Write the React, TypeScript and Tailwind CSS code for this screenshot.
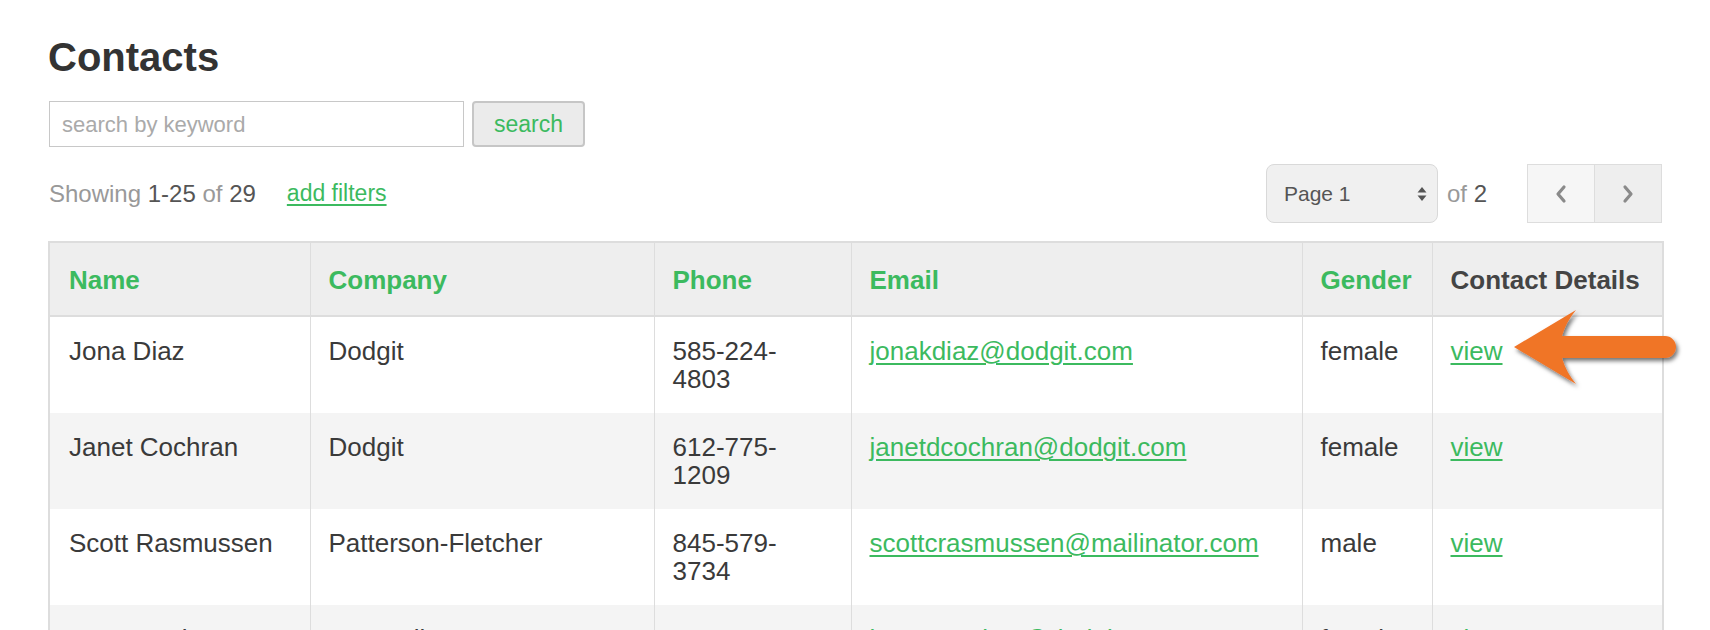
import React from "react";

const rows = [
  { name: "Jona Diaz", company: "Dodgit", phone: ["585-224-", "4803"], email: "jonakdiaz@dodgit.com", gender: "female" },
  { name: "Janet Cochran", company: "Dodgit", phone: ["612-775-", "1209"], email: "janetdcochran@dodgit.com", gender: "female" },
  { name: "Scott Rasmussen", company: "Patterson-Fletcher", phone: ["845-579-", "3734"], email: "scottcrasmussen@mailinator.com", gender: "male" },
  { name: "Jane Mackey", company: "Comtrail", phone: ["516-834-", "2051"], email: "janeemackey@dodgit.com", gender: "female" },
];

function Arrow() {
  return (
    <svg
      className="absolute left-[1500px] top-[300px]"
      width="200"
      height="100"
      viewBox="0 0 200 100"
    >
      <defs>
        <filter id="sh" x="-20%" y="-30%" width="150%" height="170%">
          <feDropShadow dx="2" dy="3" stdDeviation="2" floodColor="#000" floodOpacity="0.55" />
        </filter>
      </defs>
      <path
        d="M14 47 L76 10 Q66 22 62 36 L165 36 A11 11 0 0 1 165 58 L62 58 Q66 72 76 84 Z"
        fill="#f07428"
        filter="url(#sh)"
      />
    </svg>
  );
}

export default function App() {
  return (
    <div className="relative w-full bg-white px-[48px] pt-[35px] font-['Liberation_Sans',Arial,sans-serif] text-[#3a3a3a]">
      <h1 className="text-[40px] font-bold leading-[44px] text-[#333]">Contacts</h1>

      <div className="mt-[22px] flex items-stretch gap-[8px]">
        <div className="ml-[1px] flex h-[46px] w-[415px] items-center border border-[#c8c8c8] pl-[12px] text-[22px] text-[#aaaaaa]">
          search by keyword
        </div>
        <div className="flex h-[46px] w-[113px] items-center justify-center rounded-[4px] border-2 border-[#c6c6c6] bg-[#ebebeb] text-[23px] text-[#3cba5f]">
          search
        </div>
      </div>

      <div className="mt-[17px] flex h-[59px] items-center">
        <div className="ml-[1px] text-[24px] text-[#999]">
          Showing <span className="text-[#555]">1-25</span> of <span className="text-[#555]">29</span>
        </div>
        <span className="ml-[31px] text-[23px] text-[#3cba5f] underline decoration-[2px] underline-offset-[3px]">
          add filters
        </span>
        <div className="flex-1" />
        <div className="flex h-[59px] w-[172px] items-center justify-between rounded-[8px] border border-[#d9d9d9] bg-[#f0f0f0] pl-[17px] pr-[10px] text-[21px] text-[#555]">
          <span>Page 1</span>
          <svg width="10" height="16" viewBox="0 0 10 16">
            <path d="M5 1 L9.5 6.5 L0.5 6.5 Z" fill="#555" />
            <path d="M5 15 L9.5 9.5 L0.5 9.5 Z" fill="#555" />
          </svg>
        </div>
        <div className="ml-[9px] text-[24px] text-[#999]">
          of <span className="text-[#555]">2</span>
        </div>
        <div className="ml-[40px] flex h-[59px] border border-[#dddddd]">
          <div className="flex w-[66px] items-center justify-center bg-[#f6f6f6]">
            <svg width="14" height="20" viewBox="0 0 14 20">
              <polyline points="10,3 4,10 10,17" fill="none" stroke="#8a8a8a" strokeWidth="3.2" strokeLinecap="round" strokeLinejoin="round" />
            </svg>
          </div>
          <div className="flex w-[67px] items-center justify-center border-l border-[#dddddd] bg-[#eeeeee]">
            <svg width="14" height="20" viewBox="0 0 14 20">
              <polyline points="4,3 10,10 4,17" fill="none" stroke="#8a8a8a" strokeWidth="3.2" strokeLinecap="round" strokeLinejoin="round" />
            </svg>
          </div>
        </div>
      </div>

      <table className="mt-[18px] w-full table-fixed border-collapse border-2 border-[#dddddd] text-[26px] leading-[28px]">
        <colgroup>
          <col className="w-[261px]" />
          <col className="w-[344px]" />
          <col className="w-[197px]" />
          <col className="w-[451px]" />
          <col className="w-[130px]" />
          <col className="w-[231px]" />
        </colgroup>
        <thead>
          <tr className="bg-[#eeeeee]">
            <th className="border-b-2 border-[#dddddd] pb-[21px] pt-[23px] pl-[19px] text-left font-bold text-[#3cba5f]">Name</th>
            <th className="border-b-2 border-l border-[#dddddd] pb-[21px] pt-[23px] pl-[18px] text-left font-bold text-[#3cba5f]">Company</th>
            <th className="border-b-2 border-l border-[#dddddd] pb-[21px] pt-[23px] pl-[18px] text-left font-bold text-[#3cba5f]">Phone</th>
            <th className="border-b-2 border-l border-[#dddddd] pb-[21px] pt-[23px] pl-[18px] text-left font-bold text-[#3cba5f]">Email</th>
            <th className="border-b-2 border-l border-[#dddddd] pb-[21px] pt-[23px] pl-[18px] text-left font-bold text-[#3cba5f]">Gender</th>
            <th className="border-b-2 border-l border-[#dddddd] pb-[21px] pt-[23px] pl-[18px] text-left font-bold text-[#444]">Contact Details</th>
          </tr>
        </thead>
        <tbody>
          {rows.map((r, i) => (
            <tr key={r.email} className={i % 2 === 1 ? "bg-[#f4f4f4]" : "bg-white"}>
              <td className="py-5 pl-[19px] align-top">{r.name}</td>
              <td className="border-l border-[#dddddd] py-5 pl-[18px] align-top">{r.company}</td>
              <td className="border-l border-[#dddddd] py-5 pl-[18px] align-top">
                {r.phone[0]}
                <br />
                {r.phone[1]}
              </td>
              <td className="border-l border-[#dddddd] py-5 pl-[18px] align-top">
                <span className="text-[#3cba5f] underline decoration-[2px] underline-offset-[3px]">{r.email}</span>
              </td>
              <td className="border-l border-[#dddddd] py-5 pl-[18px] align-top">{r.gender}</td>
              <td className="border-l border-[#dddddd] py-5 pl-[18px] align-top">
                <span className="text-[#3cba5f] underline decoration-[2px] underline-offset-[3px]">view</span>
              </td>
            </tr>
          ))}
        </tbody>
      </table>

      <Arrow />
    </div>
  );
}
